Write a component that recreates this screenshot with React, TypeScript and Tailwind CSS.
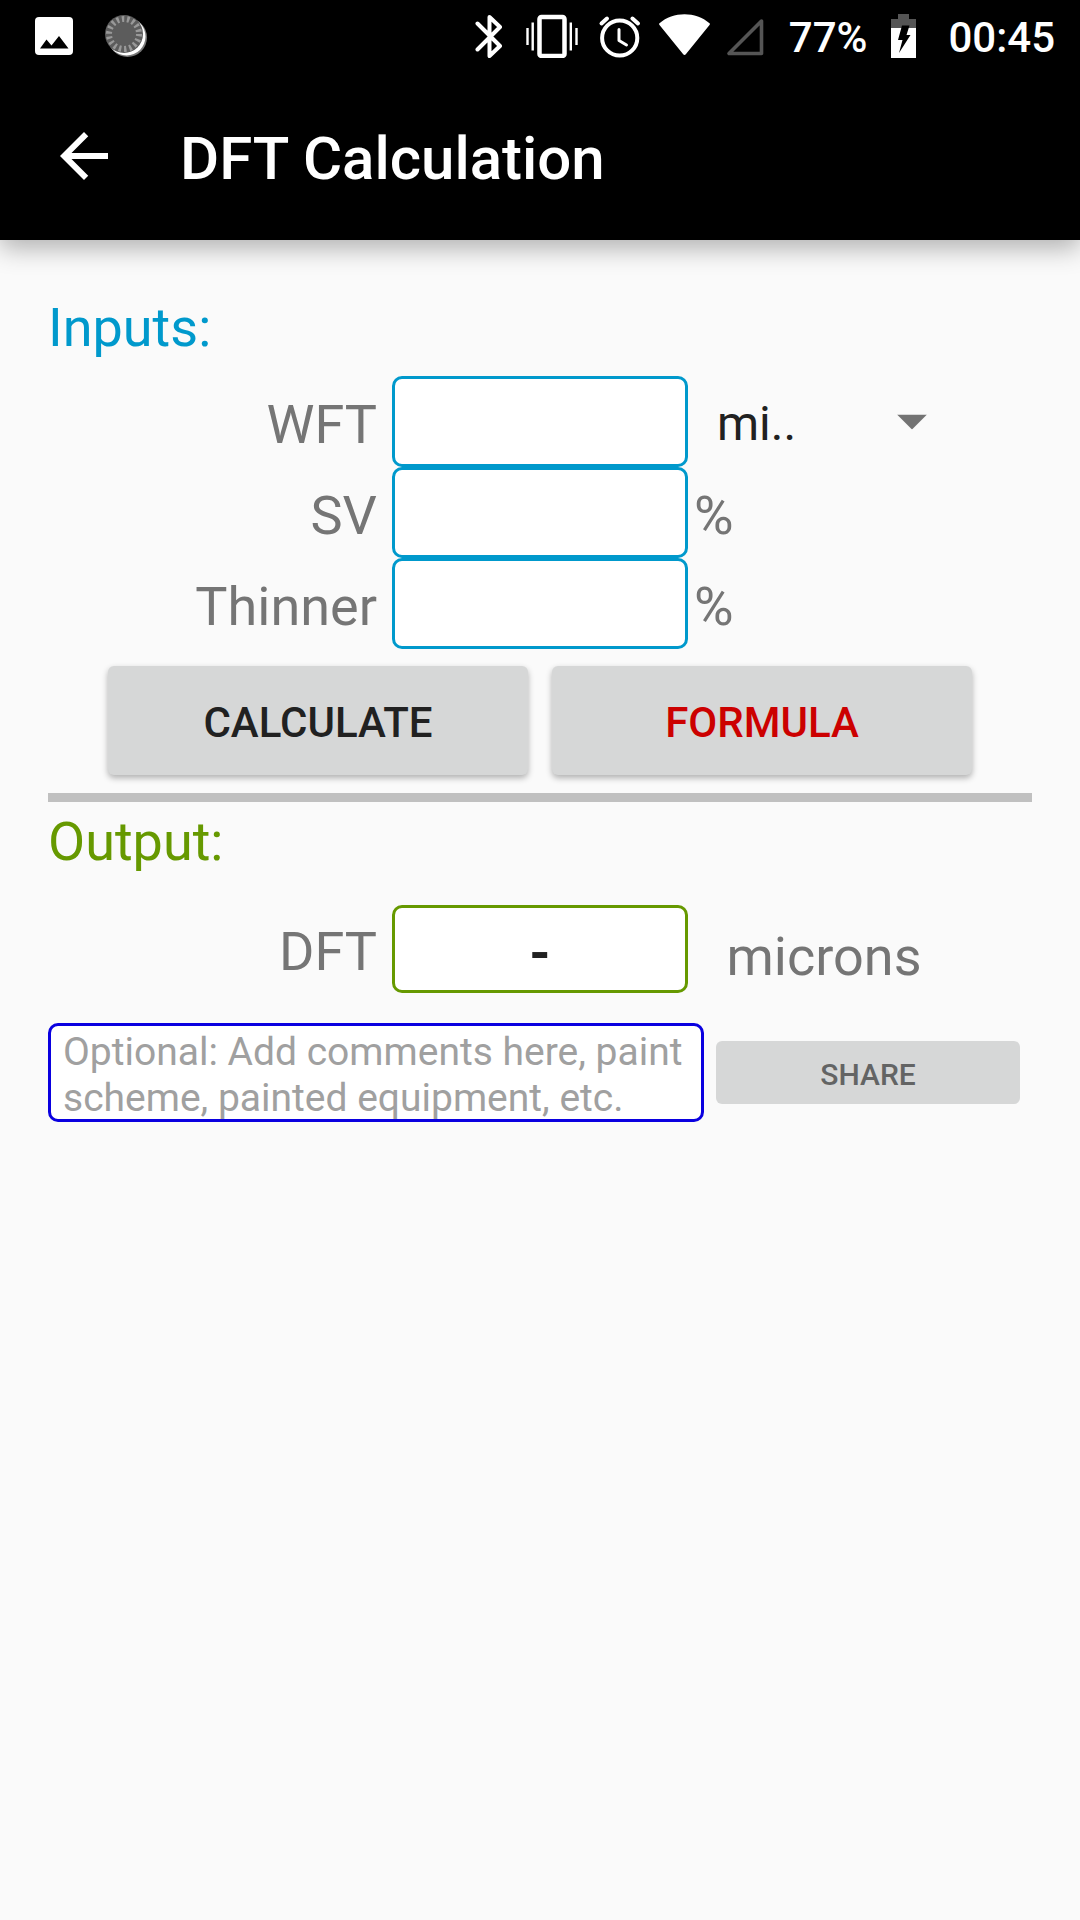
import { useState } from "react";

interface InputRowProps {
  id: string;
  label: string;
  value: string;
  onChange: (value: string) => void;
  children: React.ReactNode;
}

function InputRow({ id, label, value, onChange, children }: InputRowProps) {
  return (
    <div className="grid grid-cols-[344fr_296fr_344fr] items-center">
      <label htmlFor={id} className="pt-[6px] pr-[15px] text-right text-[54px] leading-[64px] text-[#757575]">
        {label}
      </label>
      <input
        id={id}
        type="text"
        inputMode="decimal"
        value={value}
        onChange={(e) => onChange(e.target.value)}
        className="h-[91px] w-full min-w-0 rounded-[10px] border-3 border-[#0099cc] bg-white px-3 text-center text-[54px] text-[#212121] outline-none"
      />
      {children}
    </div>
  );
}

function Percent() {
  return <span className="pt-[6px] pl-[6px] text-[54px] leading-[64px] text-[#757575]">%</span>;
}

function StatusBar() {
  return (
    <div className="flex h-[72px] items-center justify-between pr-[25px] pl-[34px] text-white">
      <div className="flex items-center gap-[30px]">
        {/* Screenshot notification */}
        <svg width="40" height="44" viewBox="0 0 40 44">
          <rect x="1" y="3" width="38" height="38" rx="4" fill="#fff" />
          <path d="M6 34.5 12.5 25.5 17.5 31.5 25 22 34.5 34.5Z" fill="#000" />
        </svg>
        {/* Dial notification */}
        <svg width="44" height="44" viewBox="0 0 44 44">
          <circle cx="23.5" cy="23.5" r="19.5" fill="#777" />
          <circle cx="22.5" cy="22.5" r="19" fill="#fff" />
          <circle cx="20" cy="20" r="19" fill="#5c5c5c" />
          <circle cx="20" cy="20" r="15" fill="none" stroke="#999" strokeWidth="6" strokeDasharray="2.4 2.836" />
        </svg>
      </div>

      <div className="flex items-center gap-4">
        <svg width="34" height="44" viewBox="0 0 34 44" fill="none" stroke="#fff" strokeWidth="4" strokeLinejoin="round" strokeLinecap="round">
          <path d="M3.5 9.5 26 32 15.5 42V3L26 13 3.5 35.5" />
        </svg>
        <svg width="58" height="44" viewBox="0 0 58 44" fill="none" stroke="#fff">
          <rect x="15.5" y="3" width="25" height="39" rx="2" strokeWidth="4.5" />
          <path d="M3.5 14v17M8.7 8.5v28M46.8 8.5v28M52.5 14v17" strokeWidth="2.4" />
        </svg>
        <svg width="44" height="44" viewBox="0 0 44 44" fill="none" stroke="#fff" strokeLinecap="round">
          <circle cx="21.7" cy="24" r="17.6" strokeWidth="4" />
          <path d="M21 15.5V26.5L28.5 31" strokeWidth="3" strokeLinejoin="round" />
          <path d="M3.5 9.5 9 4.5M34.4 4.5 40 9.5" strokeWidth="4" />
        </svg>
        <svg width="52" height="44" viewBox="0 0 52 44">
          <path d="M1.5 9.3C15-2.8 38-2.8 51.5 9.3Q52.3 10 51.5 11L28 40Q26.5 42 25 40L1.5 11Q.7 10 1.5 9.3Z" fill="#fff" />
        </svg>
        <svg width="47" height="44" viewBox="0 0 47 44" fill="none" stroke="#555" strokeWidth="3.6" strokeLinejoin="round">
          <path d="M3 39.5H35.5V7Z" />
        </svg>
        <span className="pt-[3px] text-[42px] leading-[48px] font-medium">77%</span>
        <svg width="49" height="44" viewBox="0 0 49 44">
          <path d="M15 0H26V5H33V14H8V5H15Z" fill="#555" />
          <path d="M8 14H33V44H8Z" fill="#fff" />
          <path d="M19 11.5H26.5L23.5 21H27.5L16 39 19.5 26H15Z" fill="#000" />
        </svg>
        <span className="pt-[3px] text-[42px] leading-[48px] font-medium">00:45</span>
      </div>
    </div>
  );
}

export default function App() {
  const [wft, setWft] = useState("");
  const [sv, setSv] = useState("");
  const [thinner, setThinner] = useState("");
  const [result, setResult] = useState("-");
  const [comments, setComments] = useState("");

  const calculate = () => {
    const dft = (Number(wft) * Number(sv)) / (100 + Number(thinner));
    setResult(dft > 0 ? dft.toFixed(1) : "-");
  };

  return (
    <div className="min-h-screen bg-[#fafafa] font-[Roboto,sans-serif]">
      <header className="bg-black shadow-[0_8px_24px_rgba(0,0,0,0.3)]">
        <StatusBar />
        <div className="flex h-[168px] items-center gap-[60px] px-12">
          <button type="button" aria-label="Back">
            <svg width="72" height="72" viewBox="0 0 24 24" fill="#fff">
              <path d="M20 11H7.83l5.59-5.59L12 4l-8 8 8 8 1.41-1.41L7.83 13H20v-2z" />
            </svg>
          </button>
          <h1 className="pt-[6px] text-[60px] leading-[70px] font-medium text-white">DFT Calculation</h1>
        </div>
      </header>

      <main className="px-12 pt-14">
        <h2 className="text-[54px] leading-[64px] text-[#0099cc]">Inputs:</h2>
        <div className="mt-4">
          <InputRow id="wft" label="WFT" value={wft} onChange={setWft}>
            <div className="relative mr-[72px]">
              <select aria-label="WFT unit" className="w-full appearance-none pt-1 pl-[29px] text-[48px] leading-[64px] text-[#212121] outline-none">
                <option>mi..</option>
              </select>
              <svg width="30" height="15" viewBox="0 0 30 15" className="pointer-events-none absolute top-1/2 right-[33px] -translate-y-1/2">
                <path d="M0 0H30L15 15Z" fill="#737373" />
              </svg>
            </div>
          </InputRow>
          <InputRow id="sv" label="SV" value={sv} onChange={setSv}>
            <Percent />
          </InputRow>
          <InputRow id="thinner" label="Thinner" value={thinner} onChange={setThinner}>
            <Percent />
          </InputRow>
        </div>

        <div className="mt-[17px] flex gap-6 px-[60px]">
          <button
            type="button"
            onClick={calculate}
            className="h-[109px] flex-1 rounded-md bg-[#d6d7d7] pt-1 text-[42px] font-medium text-[#212121] shadow-[0_3px_6px_rgba(0,0,0,0.3)]"
          >
            CALCULATE
          </button>
          <button
            type="button"
            className="h-[109px] flex-1 rounded-md bg-[#d6d7d7] pt-1 text-[42px] font-medium text-[#cc0000] shadow-[0_3px_6px_rgba(0,0,0,0.3)]"
          >
            FORMULA
          </button>
        </div>

        <hr className="mt-[18px] h-[9px] border-0 bg-[#c0c0c0]" />

        <h2 className="mt-2 text-[54px] leading-[64px] text-[#669900]">Output:</h2>
        <div className="mt-[31px] grid grid-cols-[344fr_296fr_344fr] items-center">
          <label htmlFor="dft" className="pt-[6px] pr-[15px] text-right text-[54px] leading-[64px] text-[#757575]">
            DFT
          </label>
          <output
            id="dft"
            className="flex h-[88px] items-center justify-center rounded-[10px] border-3 border-[#669900] bg-white pt-2 text-[54px] leading-[64px] font-bold text-[#212121]"
          >
            {result}
          </output>
          <span className="mr-[72px] pt-4 text-center text-[54px] leading-[64px] text-[#757575]">microns</span>
        </div>

        <div className="mt-[30px] flex items-center">
          <textarea
            aria-label="Comments"
            value={comments}
            onChange={(e) => setComments(e.target.value)}
            placeholder="Optional: Add comments here, paint scheme, painted equipment, etc."
            className="block h-[99px] w-2/3 resize-none overflow-hidden rounded-[10px] border-3 border-[#0a00e0] bg-white px-3 pt-[3px] text-[39px] leading-[46px] text-[#212121] outline-none placeholder:text-[#a0a0a0]"
          />
          <button
            type="button"
            disabled
            className="mx-3 h-[63px] flex-1 rounded-md bg-[#d6d7d7] pt-1 text-[30px] font-medium text-[#636464]"
          >
            SHARE
          </button>
        </div>
      </main>
    </div>
  );
}
